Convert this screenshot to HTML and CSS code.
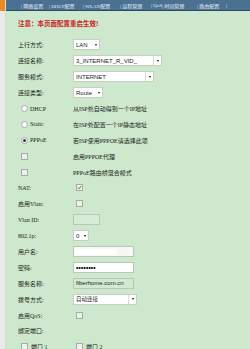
FILE: index.html
```html
<!DOCTYPE html>
<html lang="zh-CN">
<head>
<meta charset="utf-8">
<title>WAN配置</title>
<link rel="stylesheet" href="styles.css">
</head>
<body>
<div class="page">
  <div class="side"><div class="side-top"></div></div>
  <div class="main">
    <nav class="nav">
      <span class="nav-item w1">| 网络设置</span>
      <span class="nav-item w2">| DHCP配置</span>
      <span class="nav-item w3">| WLAN配置</span>
      <span class="nav-item w4">| 远程管理</span>
      <span class="nav-item w5">| QoS</span>
      <span class="nav-item w6">| 时间管理</span>
      <span class="nav-item w7">| 路由配置</span>
      <span class="nav-item">|</span>
    </nav>
    <p class="note">注意：本页面配置重启生效!</p>
    <div class="form">
      <span class="lbl">上行方式:</span>
      <span class="sel s-lan">LAN<i class="arr"></i></span>

      <span class="lbl">连接名称:</span>
      <span class="sel s-name">3_INTERNET_R_VID_<i class="arr btn"></i></span>

      <span class="lbl">服务模式:</span>
      <span class="sel s-mode">INTERNET<i class="arr btn"></i></span>

      <span class="lbl">连接类型:</span>
      <span class="sel s-route">Route<i class="arr"></i></span>

      <span class="lbl opt"><i class="radio"></i>DHCP</span>
      <span class="txt">从ISP处自动得到一个IP地址</span>

      <span class="lbl opt"><i class="radio"></i>Static</span>
      <span class="txt">在ISP处配置一个IP静态地址</span>

      <span class="lbl opt"><i class="radio on"></i>PPPoE</span>
      <span class="txt">若ISP使用PPPOE请选择此项</span>

      <span class="lbl opt"><i class="cb"></i></span>
      <span class="txt">启用PPPOE代理</span>

      <span class="lbl opt"><i class="cb"></i></span>
      <span class="txt">PPPoE路由桥混合模式</span>

      <span class="lbl">NAT:</span>
      <span class="ctl"><i class="cb on"><svg viewBox="0 0 6 6"><path d="M1 3.2 L2.4 4.6 L5 1.2" fill="none" stroke="#333" stroke-width="0.9"/></svg></i></span>

      <span class="lbl">启用Vlan:</span>
      <span class="ctl"><i class="cb"></i></span>

      <span class="lbl">Vlan ID:</span>
      <span class="inp i-vlan"></span>

      <span class="lbl">802.1p:</span>
      <span class="sel s-p">0<i class="arr"></i></span>

      <span class="lbl">用户名:</span>
      <span class="inp i-wide i-user"><i class="blur"></i></span>

      <span class="lbl">密码:</span>
      <span class="inp i-wide i-pass">••••••••</span>

      <span class="lbl">服务名称:</span>
      <span class="inp i-wide i-svc">fiberhome.com.cn</span>

      <span class="lbl">拨号方式:</span>
      <span class="sel s-dial">自动连接<i class="arr btn"></i></span>

      <span class="lbl">启用QoS:</span>
      <span class="ctl"><i class="cb"></i></span>

      <span class="lbl">绑定端口:</span>
      <span class="ctl"></span>

      <span class="lbl opt"><i class="cb"></i>端口 1</span>
      <span class="ctl"><i class="cb"></i>端口 2</span>
    </div>
  </div>
</div>
</body>
</html>
```

FILE: styles.css
```css
html, body {
  margin: 0;
  padding: 0;
}
body {
  background: #cde8cc;
  font-family: "Liberation Serif", "Noto Sans CJK SC", serif;
  color: #1a1a1a;
  width: 250px;
  height: 349px;
  overflow: hidden;
}
.page {
  display: flex;
  min-height: 349px;
}
.side {
  width: 6px;
  flex: none;
  background: #e8ebe6;
  border-right: 1px solid #d5ddd3;
  box-sizing: border-box;
}
.side-top {
  height: 11px;
  background: #ee8a22;
}
.main {
  flex: 1;
}
.nav {
  height: 10px;
  background: #4a7192;
  border-bottom: 1px solid #2c4a62;
  display: flex;
  align-items: center;
  padding-left: 15px;
  font-size: 5px;
  color: #e8eef4;
  white-space: nowrap;
}
.nav-item { flex: none; }
.w1 { width: 28px; }
.w2 { width: 34px; }
.w3 { width: 37px; }
.w4 { width: 31px; }
.w5 { width: 11px; }
.w6 { width: 35px; }
.w7 { width: 29px; }

.note {
  margin: 8px 0 10px 12px;
  height: 8px;
  line-height: 8px;
  font-size: 6.5px;
  font-weight: bold;
  color: #cc1a1a;
  font-family: "Noto Sans CJK SC", sans-serif;
}
.form {
  display: grid;
  grid-template-columns: 55px 1fr;
  grid-auto-rows: 15.9px;
  align-items: center;
  padding-left: 12px;
  font-size: 6px;
}
.lbl, .txt, .ctl {
  display: flex;
  align-items: center;
  white-space: nowrap;
  height: 10px;
}
.opt {
  padding-left: 3px;
}
.radio {
  width: 5px;
  height: 5px;
  border-radius: 50%;
  border: 1px solid #a8aea8;
  background: #fafafa;
  margin-right: 2px;
  position: relative;
  flex: none;
}
.radio.on::after {
  content: "";
  position: absolute;
  left: 1px;
  top: 1px;
  width: 3px;
  height: 3px;
  border-radius: 50%;
  background: #333;
}
.cb {
  width: 5px;
  height: 5px;
  border: 1px solid #a4aca4;
  background: #eef2ee;
  margin-right: 3px;
  flex: none;
  display: flex;
}
.ctl .cb {
  margin-left: 3px;
}
.cb svg {
  width: 5px;
  height: 5px;
}
.sel {
  display: flex;
  align-items: center;
  height: 9px;
  background: #fff;
  border: 1px solid #c4cfc4;
  font-family: "Liberation Sans", "Noto Sans CJK SC", sans-serif;
  font-size: 6px;
  padding-left: 2px;
  justify-self: start;
  overflow: hidden;
  white-space: nowrap;
}
.arr {
  margin-left: auto;
  width: 7px;
  height: 9px;
  display: flex;
  align-items: center;
  justify-content: center;
  flex: none;
}
.arr::after {
  content: "";
  border-left: 1.5px solid transparent;
  border-right: 1.5px solid transparent;
  border-top: 2px solid #111;
}
.arr.btn {
  border-left: 1px solid #d6ddd6;
}
.s-lan { width: 23px; }
.s-name { width: 85px; }
.s-mode { width: 77px; }
.s-route { width: 26px; }
.s-p { width: 12px; }
.s-dial { width: 60px; font-family: "Noto Sans CJK SC", sans-serif; font-size: 5.5px; }

.inp {
  display: flex;
  align-items: center;
  height: 9px;
  border: 1px solid #b9c6b9;
  font-family: "Liberation Sans", sans-serif;
  font-size: 6px;
  padding-left: 2px;
  justify-self: start;
  white-space: nowrap;
}
.i-vlan {
  width: 23px;
  background: #d6ecd5;
}
.i-wide { width: 57px; }
.i-user { background: #f6f8f6; }
.blur {
  width: 40px;
  height: 4px;
  background: #fff;
  box-shadow: 0 0 2px 1px #fff;
}
.i-pass {
  background: #fff;
  font-size: 6.5px;
  font-weight: bold;
  letter-spacing: 0.2px;
  color: #000;
}
.i-svc {
  background: #d3ead2;
}
```
